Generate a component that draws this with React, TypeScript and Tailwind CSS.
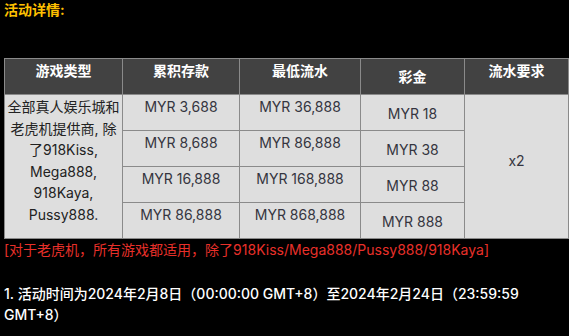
const rows = [
  { deposit: "MYR 3,688", turnover: "MYR 36,888", bonus: "MYR 18" },
  { deposit: "MYR 8,688", turnover: "MYR 86,888", bonus: "MYR 38" },
  { deposit: "MYR 16,888", turnover: "MYR 168,888", bonus: "MYR 88" },
  { deposit: "MYR 86,888", turnover: "MYR 868,888", bonus: "MYR 888" },
];

const App = () => {
  return (
    <div className="w-[569px] h-[336px] bg-black overflow-hidden font-['Inter','Noto_Sans_CJK_SC',sans-serif] text-[14px]">
      <div className="w-full pl-1 pr-px">
        {/* Title */}
        <p className="leading-[20px] font-bold text-[#ffc000]">活动详情:</p>

        {/* Table */}
        <table className="mt-[38px] w-[564px] table-fixed border-collapse border border-[#8a8a8a] text-center leading-[21.6px]">
          <colgroup>
            <col className="w-[118px]" />
            <col className="w-[117px]" />
            <col className="w-[121px]" />
            <col className="w-[104px]" />
            <col className="w-[104px]" />
          </colgroup>
          <thead>
            <tr className="h-[36px] bg-[#424242] text-white font-bold">
              <th className="border border-[#8a8a8a] align-top pt-px">游戏类型</th>
              <th className="border border-[#8a8a8a] align-top pt-px">累积存款</th>
              <th className="border border-[#8a8a8a] align-top pt-px">最低流水</th>
              <th className="border border-[#8a8a8a] align-middle pt-px">彩金</th>
              <th className="border border-[#8a8a8a] align-top pt-px">流水要求</th>
            </tr>
          </thead>
          <tbody className="bg-[#dedede] text-[#353540]">
            {rows.map((r, i) => (
              <tr key={i} className="h-[36px]">
                {i === 0 && (
                  <td rowSpan={4} className="border border-[#8a8a8a] align-top px-0 pt-px text-[#222]">
                    全部真人娱乐城和老虎机提供商, 除了918Kiss, Mega888, 918Kaya, Pussy888.
                  </td>
                )}
                <td className="border border-[#8a8a8a] align-top pt-px">{r.deposit}</td>
                <td className="border border-[#8a8a8a] align-top pt-px">{r.turnover}</td>
                <td className="border border-[#8a8a8a] align-middle pt-[2px]">{r.bonus}</td>
                {i === 0 && (
                  <td rowSpan={4} className="border border-[#8a8a8a] align-middle pb-[12px]">
                    x2
                  </td>
                )}
              </tr>
            ))}
          </tbody>
        </table>

        {/* Note */}
        <p className="mt-px leading-[20px] text-[#e8302a]">
          [对于老虎机，所有游戏都适用，除了918Kiss/Mega888/Pussy888/918Kaya]
        </p>

        <p className="mt-[23px] leading-[21px] text-white font-medium">
          1. 活动时间为2024年2月8日（00:00:00 GMT+8）至2024年2月24日（23:59:59 GMT+8）
        </p>
      </div>
    </div>
  );
};

export default App;
